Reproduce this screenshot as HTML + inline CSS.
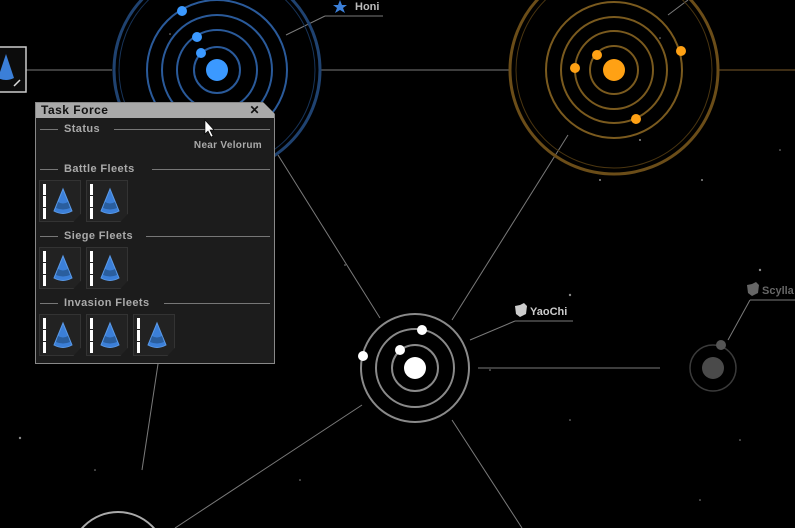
<!DOCTYPE html>
<html><head><meta charset="utf-8"><style>
html,body{margin:0;padding:0;background:#000;width:795px;height:528px;overflow:hidden;font-family:"Liberation Sans",sans-serif}
#map{position:absolute;left:0;top:0}
.panel{position:absolute;left:35px;top:102px;width:240px;height:262px;background:#1c1c1c;border:1px solid #888;box-sizing:border-box;clip-path:polygon(0 0,228px 0,240px 12px,240px 100%,0 100%)}
.title{height:15px;background:#a9a9a9;color:#111;font-weight:bold;font-size:12px;line-height:15px;padding-left:5px;position:relative;letter-spacing:0.5px}
.title .x{position:absolute;right:14px;top:0;font-size:12px}
.sec{position:absolute;left:4px;right:4px;height:12px;color:#aaa;font-weight:bold;font-size:11px;line-height:12px;letter-spacing:0.4px}
.sec .ln{position:absolute;top:6px;height:1px;background:#777}
.sec span{position:absolute;left:24px;top:0}
.near{position:absolute;right:12px;top:37px;color:#aaa;font-size:10px;font-weight:bold;letter-spacing:0.3px}
.slot{position:absolute;width:42px;height:42px;border:1px solid #333;box-sizing:border-box;background:#222;clip-path:polygon(0 0,100% 0,100% 80%,82% 100%,0 100%)}
.slot .bar{position:absolute;left:3px;top:3px;width:3px;height:36px;background:repeating-linear-gradient(#fff 0 11px,#222 11px 12px)}
.slot svg{position:absolute;left:12px;top:6px}
</style></head><body>
<svg id="map" width="795" height="528" viewBox="0 0 795 528">
<g fill="#888">
<circle cx="20" cy="438" r="1.2"/><circle cx="170" cy="34" r="0.8"/><circle cx="660" cy="38" r="0.8"/><circle cx="702" cy="180" r="1"/><circle cx="760" cy="270" r="1.2"/><circle cx="570" cy="295" r="1.2"/><circle cx="490" cy="370" r="0.8"/><circle cx="300" cy="480" r="0.8"/><circle cx="640" cy="140" r="1"/><circle cx="570" cy="420" r="0.8"/><circle cx="700" cy="500" r="0.8"/><circle cx="345" cy="265" r="0.8"/><circle cx="740" cy="440" r="0.8"/><circle cx="600" cy="180" r="1"/><circle cx="270" cy="218" r="0.8"/><circle cx="95" cy="470" r="0.8"/><circle cx="780" cy="150" r="0.8"/>
</g>
<g stroke="#7a7a7a" stroke-width="1" fill="none">
<line x1="278" y1="155" x2="380" y2="318"/>
<line x1="568" y1="135" x2="452" y2="320"/>
<line x1="478" y1="368" x2="660" y2="368"/>
<line x1="362" y1="405" x2="175" y2="528"/>
<line x1="452" y1="420" x2="522" y2="528"/>
<line x1="158" y1="364" x2="142" y2="470"/>
<line x1="0" y1="70" x2="112" y2="70"/>
<line x1="320" y1="70" x2="510" y2="70"/>
<line x1="718" y1="70" x2="795" y2="70" stroke="#7a5a2a"/>
<line x1="286" y1="35" x2="325" y2="16"/><line x1="325" y1="16" x2="383" y2="16"/>
<line x1="470" y1="340" x2="515" y2="321"/><line x1="515" y1="321" x2="573" y2="321"/>
<line x1="728" y1="340" x2="750" y2="300"/><line x1="750" y1="300" x2="795" y2="300"/>
<line x1="668" y1="15" x2="688" y2="0"/>
</g>
<g fill="none" stroke="#2a5a9a" stroke-width="2">
<circle cx="217" cy="70" r="103" stroke="#1f4270" stroke-width="3"/>
<circle cx="217" cy="70" r="98" stroke="#173358" stroke-width="1"/>
<circle cx="217" cy="70" r="23"/><circle cx="217" cy="70" r="40"/><circle cx="217" cy="70" r="55"/><circle cx="217" cy="70" r="70"/>
</g>
<g fill="#3b99ff"><circle cx="217" cy="70" r="11"/><circle cx="182" cy="11" r="5"/><circle cx="197" cy="37" r="5"/><circle cx="201" cy="53" r="5"/></g>
<g fill="none" stroke="#7a5a1e" stroke-width="2">
<circle cx="614" cy="70" r="104" stroke="#6b4d18" stroke-width="3"/>
<circle cx="614" cy="70" r="98" stroke="#4a3510" stroke-width="1"/>
<circle cx="614" cy="70" r="24"/><circle cx="614" cy="70" r="39"/><circle cx="614" cy="70" r="53"/><circle cx="614" cy="70" r="68"/>
</g>
<g fill="#ffa114"><circle cx="614" cy="70" r="11"/><circle cx="575" cy="68" r="5"/><circle cx="597" cy="55" r="5"/><circle cx="636" cy="119" r="5"/><circle cx="681" cy="51" r="5"/></g>
<g fill="none" stroke="#8a8a8a" stroke-width="2">
<circle cx="415" cy="368" r="23"/><circle cx="415" cy="368" r="39"/><circle cx="415" cy="368" r="54"/>
</g>
<g fill="#fff"><circle cx="415" cy="368" r="11"/><circle cx="422" cy="330" r="5"/><circle cx="400" cy="350" r="5"/><circle cx="363" cy="356" r="5"/></g>
<circle cx="713" cy="368" r="23" fill="none" stroke="#3a3a3a" stroke-width="1.5"/>
<circle cx="713" cy="368" r="11" fill="#4a4a4a"/><circle cx="721" cy="345" r="5" fill="#555"/>
<circle cx="118" cy="560" r="48" fill="none" stroke="#aaa" stroke-width="2"/>
<path d="M340 0 L342 5 L347 5 L343 8 L345 13 L340 10 L335 13 L337 8 L333 5 L338 5Z" fill="#3b7fd8"/>
<text x="355" y="10" fill="#bbb" font-size="11" font-weight="bold" font-family="Liberation Sans,sans-serif">Honi</text>
<path d="M520 305 L524 303 L527 306 L526 314 L520 317 L516 314 L515 306Z" fill="#ccc"/>
<text x="530" y="315" fill="#ccc" font-size="11" font-weight="bold" font-family="Liberation Sans,sans-serif">YaoChi</text>
<path d="M752 284 L756 282 L759 285 L758 293 L752 296 L748 293 L747 285Z" fill="#666"/>
<text x="762" y="294" fill="#666" font-size="11" font-weight="bold" font-family="Liberation Sans,sans-serif">Scylla</text>
<rect x="-2" y="47" width="28" height="45" fill="#0c0c0c" stroke="#ccc" stroke-width="1.5"/>
<path d="M6 54 L14 78 Q6 82 -2 78Z" fill="#3b7fd8"/>
<path d="M14 86 L20 80" stroke="#ddd" stroke-width="1.5"/>
</svg>
<div class="panel">
<div class="title">Task Force<span class="x">✕</span></div>
<div class="sec" style="top:20px"><div class="ln" style="left:0;width:18px"></div><span>Status</span><div class="ln" style="left:74px;right:0"></div></div>
<div class="near">Near Velorum</div>
<div class="sec" style="top:60px"><div class="ln" style="left:0;width:18px"></div><span>Battle Fleets</span><div class="ln" style="left:112px;right:0"></div></div>
<div class="sec" style="top:127px"><div class="ln" style="left:0;width:18px"></div><span>Siege Fleets</span><div class="ln" style="left:106px;right:0"></div></div>
<div class="sec" style="top:194px"><div class="ln" style="left:0;width:18px"></div><span>Invasion Fleets</span><div class="ln" style="left:124px;right:0"></div></div>
</div>
<div class="slot" style="left:39px;top:180px"><div class="bar"></div><svg width="22" height="30"><path d="M11 2 L20 24 Q11 29 2 24Z" fill="#3b7fd8" stroke="#5a9ae8" stroke-width="1"/><path d="M6 15 Q11 18 16 15 L18 21 Q11 24 4 21Z" fill="#2a5e9e"/></svg></div>
<div class="slot" style="left:86px;top:180px"><div class="bar"></div><svg width="22" height="30"><path d="M11 2 L20 24 Q11 29 2 24Z" fill="#3b7fd8" stroke="#5a9ae8" stroke-width="1"/><path d="M6 15 Q11 18 16 15 L18 21 Q11 24 4 21Z" fill="#2a5e9e"/></svg></div>
<div class="slot" style="left:39px;top:247px"><div class="bar"></div><svg width="22" height="30"><path d="M11 2 L20 24 Q11 29 2 24Z" fill="#3b7fd8" stroke="#5a9ae8" stroke-width="1"/><path d="M6 15 Q11 18 16 15 L18 21 Q11 24 4 21Z" fill="#2a5e9e"/></svg></div>
<div class="slot" style="left:86px;top:247px"><div class="bar"></div><svg width="22" height="30"><path d="M11 2 L20 24 Q11 29 2 24Z" fill="#3b7fd8" stroke="#5a9ae8" stroke-width="1"/><path d="M6 15 Q11 18 16 15 L18 21 Q11 24 4 21Z" fill="#2a5e9e"/></svg></div>
<div class="slot" style="left:39px;top:314px"><div class="bar"></div><svg width="22" height="30"><path d="M11 2 L20 24 Q11 29 2 24Z" fill="#3b7fd8" stroke="#5a9ae8" stroke-width="1"/><path d="M6 15 Q11 18 16 15 L18 21 Q11 24 4 21Z" fill="#2a5e9e"/></svg></div>
<div class="slot" style="left:86px;top:314px"><div class="bar"></div><svg width="22" height="30"><path d="M11 2 L20 24 Q11 29 2 24Z" fill="#3b7fd8" stroke="#5a9ae8" stroke-width="1"/><path d="M6 15 Q11 18 16 15 L18 21 Q11 24 4 21Z" fill="#2a5e9e"/></svg></div>
<div class="slot" style="left:133px;top:314px"><div class="bar"></div><svg width="22" height="30"><path d="M11 2 L20 24 Q11 29 2 24Z" fill="#3b7fd8" stroke="#5a9ae8" stroke-width="1"/><path d="M6 15 Q11 18 16 15 L18 21 Q11 24 4 21Z" fill="#2a5e9e"/></svg></div>
<svg style="position:absolute;left:0;top:0" width="795" height="528"><path d="M205 120 L205 134 L208 131 L211 137 L213 136 L210 130 L214 130Z" fill="#fff" stroke="#000" stroke-width="0.6"/></svg>
</body></html>
